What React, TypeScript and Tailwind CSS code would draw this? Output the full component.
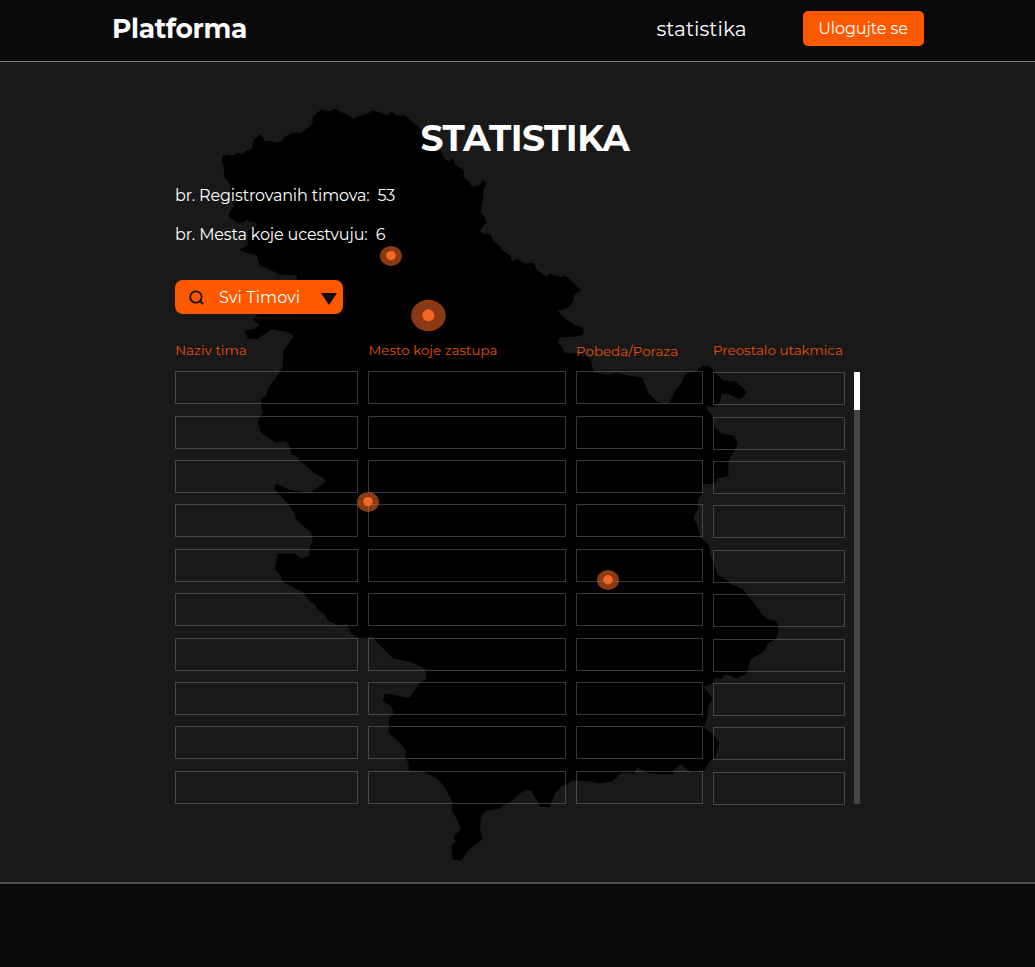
import React from "react";

const MAP_OUTLINE =
  "M222 161 L223 157 L228 155 L233 156 L238 153 L242 155 L246 151 L252 149 L254 140 L260 135 L263 138 L264 142 L270 141 L275 143 L281 142 L285 137 L293 133 L300 134 L307 129 L313 123 L313 117 L321 110 L330 112 L335 109 L342 113 L347 115 L353 119 L360 116 L368 114 L372 111 L380 113 L387 116 L391 112 L397 116 L405 116 L412 122 L422 131 L440 150 L443 157 L448 162 L453 159 L455 165 L463 170 L464 178 L468 181 L472 187 L480 185 L483 180 L486 184 L483 190 L483 197 L480 213 L484 216 L486 222 L480 230 L481 234 L490 234 L493 241 L500 247 L501 250 L510 256 L512 262 L517 259 L525 264 L533 263 L537 271 L547 277 L550 274 L562 278 L565 276 L573 282 L576 286 L581 290 L573 295 L573 300 L569 307 L557 311 L565 319 L574 325 L583 328 L583 334 L577 336 L560 337 L557 342 L562 347 L564 353 L577 354 L590 359 L593 372 L601 374 L608 375 L617 373 L628 376 L642 378 L645 386 L648 393 L657 402 L665 404 L670 402 L675 392 L681 384 L687 373 L695 372 L703 366 L710 367 L717 375 L723 381 L735 382 L741 386 L746 392 L743 397 L738 399 L734 396 L727 393 L721 394 L720 402 L713 406 L706 406 L707 410 L712 417 L715 428 L722 434 L733 436 L737 442 L735 450 L730 457 L728 463 L728 476 L717 478 L715 483 L703 484 L701 495 L697 500 L698 508 L693 518 L697 526 L700 537 L709 546 L710 555 L713 562 L717 575 L725 579 L732 585 L742 589 L753 602 L763 616 L768 620 L775 621 L778 625 L778 632 L775 639 L768 643 L763 652 L750 659 L747 673 L736 678 L730 675 L725 674 L721 679 L716 677 L712 683 L703 687 L712 698 L708 707 L707 717 L703 727 L713 735 L719 743 L715 757 L708 762 L705 770 L692 772 L680 764 L673 770 L673 774 L660 774 L649 773 L637 767 L634 773 L622 772 L612 781 L600 783 L590 781 L572 780 L567 784 L562 785 L555 793 L549 807 L540 806 L532 791 L527 789 L520 793 L510 802 L504 804 L500 808 L485 811 L480 818 L480 829 L482 839 L468 850 L461 860 L453 859 L452 845 L456 842 L454 837 L461 829 L457 818 L452 810 L453 802 L445 787 L437 778 L422 771 L409 770 L409 763 L405 757 L407 752 L400 742 L389 733 L389 720 L394 712 L391 706 L383 701 L385 694 L398 696 L405 698 L410 698 L420 683 L427 680 L426 669 L412 662 L393 658 L377 642 L372 636 L362 638 L352 634 L347 624 L337 625 L328 620 L325 614 L319 611 L315 604 L310 601 L303 592 L295 588 L283 582 L281 576 L275 568 L278 554 L295 554 L301 559 L309 556 L310 548 L313 540 L312 533 L297 520 L295 513 L287 502 L275 490 L276 484 L284 488 L293 491 L310 493 L318 488 L326 482 L324 478 L313 472 L306 465 L300 461 L298 457 L292 454 L290 446 L286 441 L275 442 L268 437 L261 432 L258 422 L263 413 L261 399 L267 395 L268 389 L276 378 L283 367 L284 350 L294 337 L293 334 L285 331 L277 330 L272 329 L268 331 L257 339 L248 338 L245 331 L255 329 L260 325 L253 319 L258 315 L297 314 L297 275 L280 274 L269 269 L260 265 L257 255 L248 253 L240 250 L248 245 L248 231 L257 226 L256 223 L249 221 L247 219 L244 222 L237 223 L229 216 L231 210 L235 206 L231 196 L231 185 L224 176 L225 168 Z";

const MARKERS = [
  { x: 391, y: 256, rx: 11, ry: 10, dot: 4.8 },
  { x: 428.4, y: 315.5, rx: 17.3, ry: 15.7, dot: 6 },
  { x: 368, y: 502, rx: 11, ry: 10, dot: 4.8 },
  { x: 608, y: 580, rx: 11, ry: 10, dot: 4.8 },
];

const COLUMNS = [
  { title: "Naziv tima", box: "w-[183px]", label: "translate-x-[0.2px]" },
  { title: "Mesto koje zastupa", box: "w-[198px]", label: "translate-x-[0.5px]" },
  { title: "Pobeda/Poraza", box: "w-[127px]", label: "translate-y-px" },
  { title: "Preostalo utakmica", box: "w-[132px] pt-px", label: "-translate-y-px" },
];

function SerbiaMap() {
  return (
    <svg className="pointer-events-none absolute left-0 top-0" width="1035" height="820" viewBox="0 62 1035 820">
      <path d={MAP_OUTLINE} fill="#000" stroke="#000" strokeWidth="0.8" strokeLinejoin="round" />
      {MARKERS.map((m) => (
        <g key={`${m.x}-${m.y}`}>
          <ellipse cx={m.x} cy={m.y} rx={m.rx} ry={m.ry} fill="#8b3913" />
          <circle cx={m.x} cy={m.y - 0.3} r={m.dot} fill="#f66625" />
        </g>
      ))}
    </svg>
  );
}

function Column({ title, box, label }: { title: string; box: string; label: string }) {
  return (
    <div className={`flex flex-col ${box}`}>
      <div className={`h-[31.4px] whitespace-nowrap text-[13.4px] leading-[20px] tracking-[0.03px] text-[#e65003] ${label}`}>
        {title}
      </div>
      <div className="flex flex-col gap-[11.37px]">
        {Array.from({ length: 10 }, (_, i) => (
          <div key={i} className="h-[33px] border border-[#8c8c8c]/40" />
        ))}
      </div>
    </div>
  );
}

export default function App() {
  return (
    <div className="flex h-[967px] w-[1035px] flex-col overflow-hidden bg-[#191919] font-['Montserrat','Inter',sans-serif] text-white">
      <header className="flex h-[62px] shrink-0 items-start border-b border-[#7d7d7d] bg-[#0a0a0c] pl-[112px]">
        <div className="mt-[12px] w-[544.5px] text-[26.5px] font-bold leading-[34px] tracking-[-0.35px]">Platforma</div>
        <a className="mt-[14px] w-[146px] text-[20px] leading-[30px] tracking-[0.05px]">statistika</a>
        <button className="mt-[11px] h-[35px] w-[121px] whitespace-nowrap rounded-[5px] bg-[#ff5900] text-[16px] leading-[35px] tracking-[-0.1px]">
          Ulogujte se
        </button>
      </header>

      <main className="relative h-[820px] shrink-0">
        <SerbiaMap />
        <div className="relative flex flex-col pl-[175px]">
          <h1 className="ml-[245.5px] mt-[53px] h-[46px] text-[36px] font-bold leading-[46px] tracking-[-0.5px]">STATISTIKA</h1>
          <p className="mt-[23px] whitespace-pre text-[16px] leading-[24px] tracking-[-0.15px]">br. Registrovanih timova:  53</p>
          <p className="mt-[15px] whitespace-pre text-[16px] leading-[24px] tracking-[-0.14px]">br. Mesta koje ucestvuju:  6</p>
          <button className="mt-[33px] flex h-[34px] w-[168px] items-center rounded-[8px] bg-[#ff5900] pl-[14px]">
            <svg className="mt-px" width="16" height="16" viewBox="0 0 16 16" fill="none" stroke="#15100c" strokeWidth="1.8">
              <circle cx="6.9" cy="7" r="5.7" />
              <path d="M10.8 11l3.4 3.1" />
            </svg>
            <span className="ml-[14px] w-[102px] whitespace-nowrap pt-[2px] text-left text-[16px] leading-[24px] tracking-[0.12px]">
              Svi Timovi
            </span>
            <svg className="mt-[3px]" width="16" height="12" viewBox="0 0 16 12" fill="#100d0b">
              <path d="M0 0h16L8 12z" />
            </svg>
          </button>
          <div className="mt-[26px] flex">
            <div className="flex gap-[10px]">
              {COLUMNS.map((c) => (
                <Column key={c.title} {...c} />
              ))}
            </div>
            <div className="ml-[9px] mt-[32px] h-[432px] w-[6px] bg-[#454545]">
              <div className="h-[38px] w-full bg-white" />
            </div>
          </div>
        </div>
      </main>

      <footer className="flex-1 border-t-2 border-[#505050] bg-[#0a0a0c]" />
    </div>
  );
}
